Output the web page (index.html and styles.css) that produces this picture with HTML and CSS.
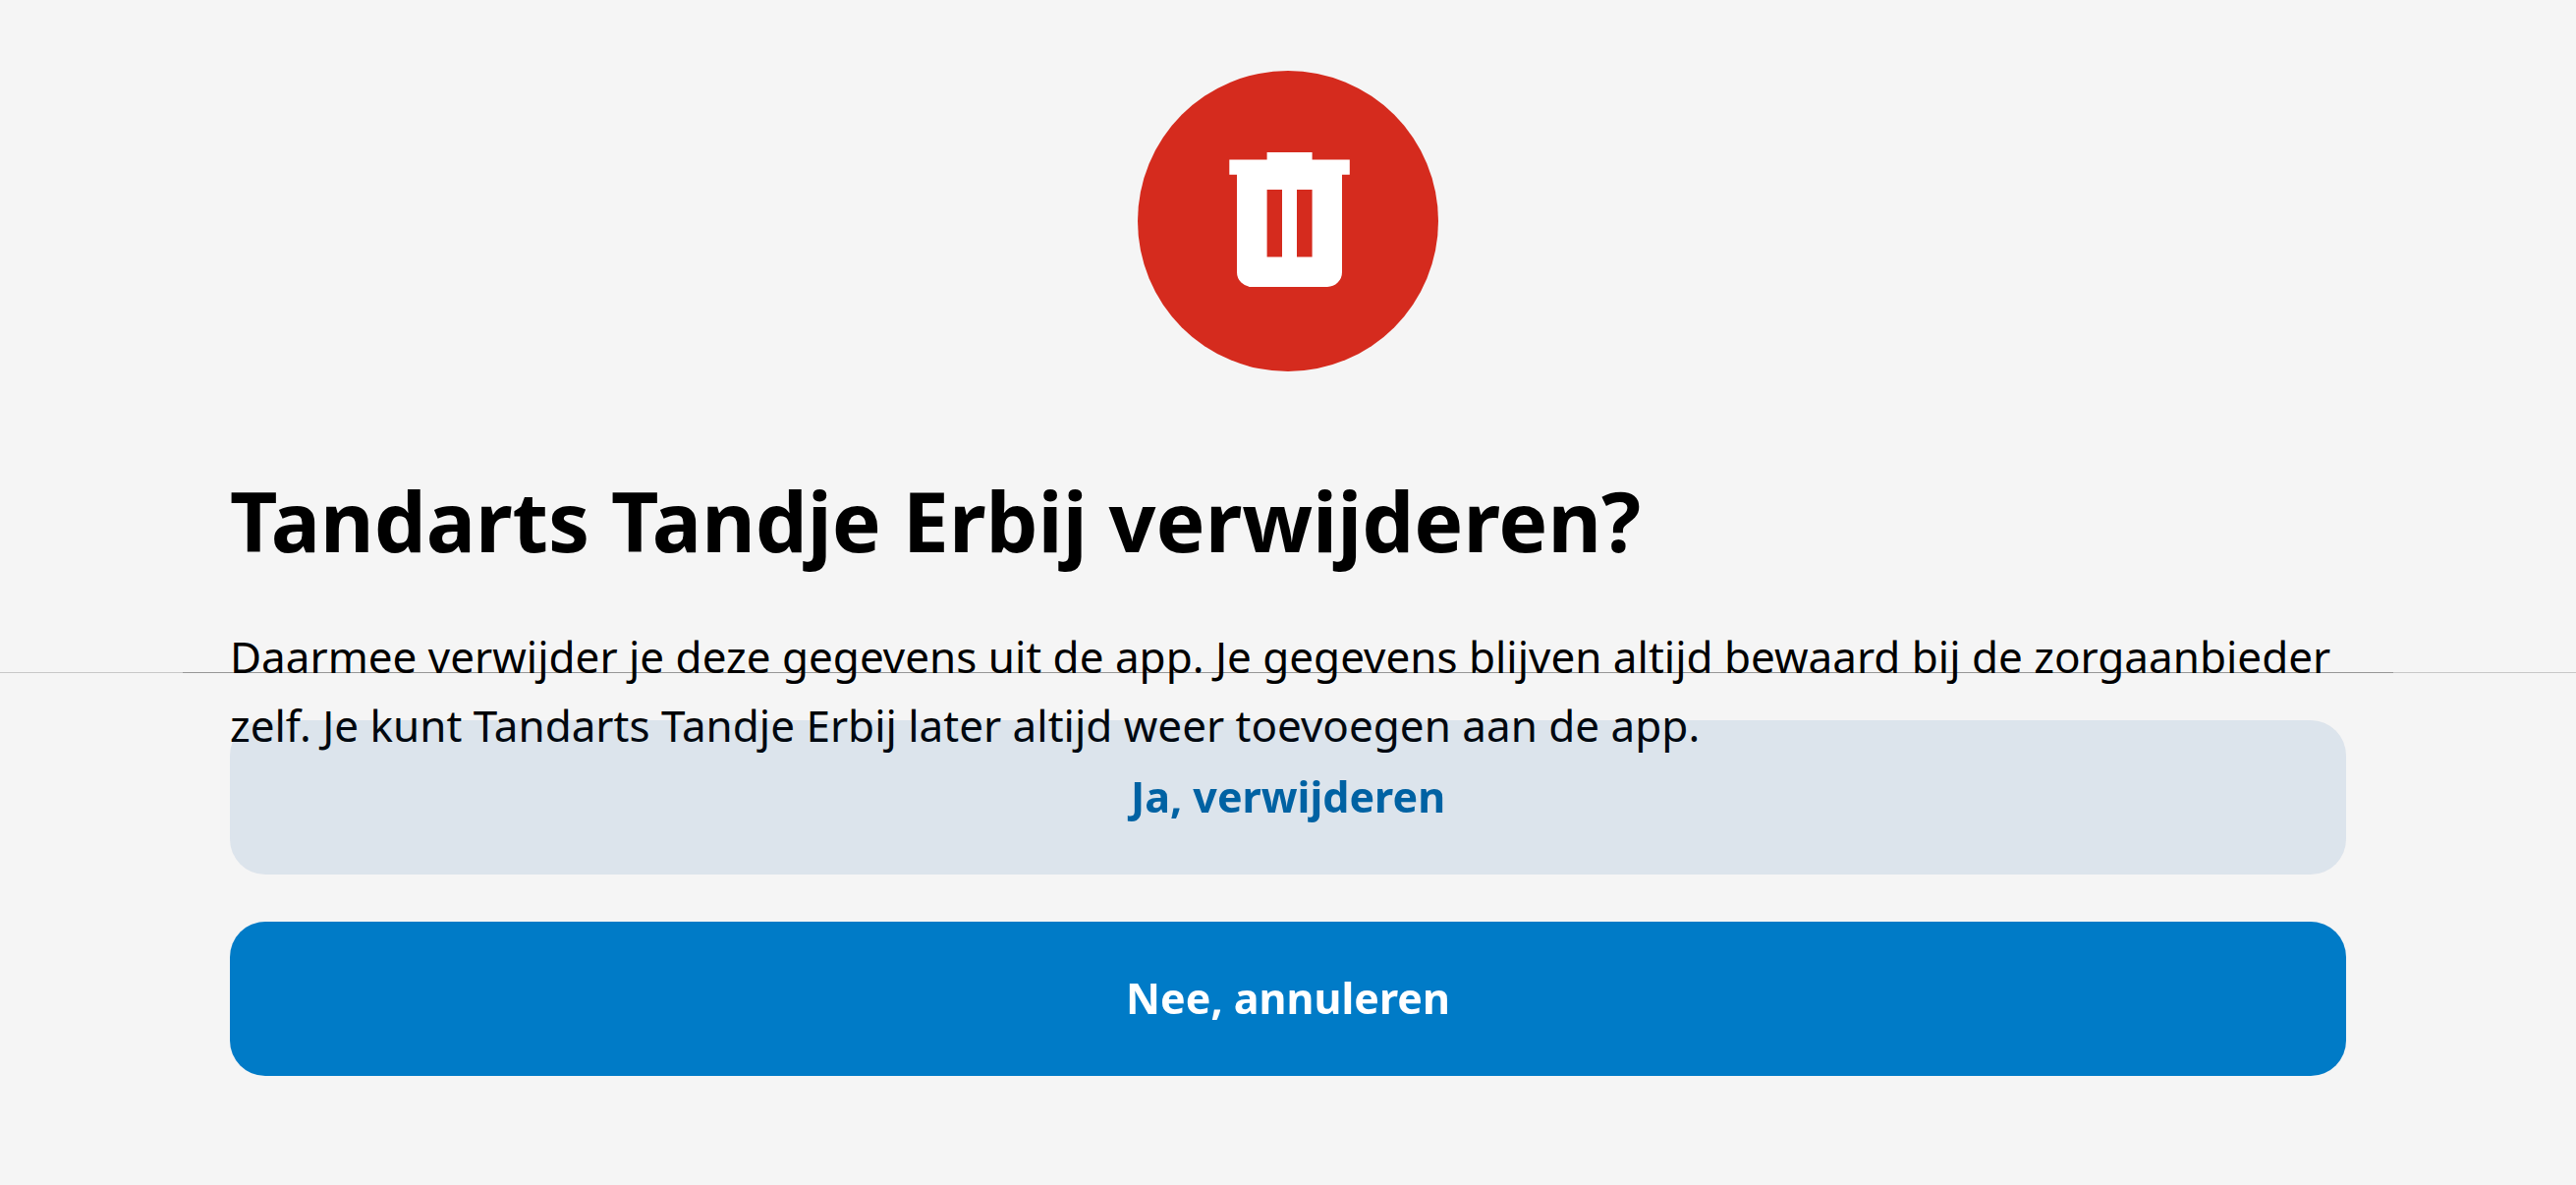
FILE: index.html
```
<!DOCTYPE html>
<html lang="nl">
<head>
  <meta charset="utf-8">
  <meta name="viewport" content="width=device-width, initial-scale=1">
  <title>Tandarts Tandje Erbij verwijderen?</title>
  <link rel="stylesheet" href="styles.css">
</head>
<body>
  <main class="content">
    <svg class="badge" viewBox="0 0 306 306" aria-hidden="true">
      <circle cx="153" cy="153" r="153" fill="#d52b1e"/>
      <path fill="#fff" fill-rule="evenodd" d="M131.6 83h46v7.500h38.200v15.200h-7.800v99.300a15 15 0 0 1-15 15h-77a15 15 0 0 1-15-15v-99.300h-7.700v-15.200h38.300zM131.600 121h15.400v68.500h-15.400zM162 121h15.600v68.500h-15.600z"/>
    </svg>
    <h1 class="title">Tandarts Tandje Erbij verwijderen?</h1>
    <p class="text">Daarmee verwijder je deze gegevens uit de app. Je gegevens blijven altijd bewaard bij de zorgaanbieder zelf. Je kunt Tandarts Tandje Erbij later altijd weer toevoegen aan de app.</p>
  </main>
  <footer class="footer">
    <div class="actions">
      <button class="button button-secondary" type="button">Ja, verwijderen</button>
      <button class="button button-primary" type="button">Nee, annuleren</button>
    </div>
  </footer>
</body>
</html>
```
FILE: styles.css
```
* {
  box-sizing: border-box;
}

body {
  margin: 0;
  background: #f5f5f5;
  color: #000;
  font-family: "Noto Sans", "Open Sans", sans-serif;
}

.content {
  display: flex;
  flex-direction: column;
  padding: 72px 234px 0;
}

.badge {
  align-self: center;
  width: 306px;
  height: 306px;
}

.title {
  margin: 94px 0 0;
  font-size: 84px;
  font-weight: 700;
  line-height: 116px;
}

.text {
  margin: 45px 0 0;
  font-size: 44px;
  line-height: 70px;
}

.footer {
  position: fixed;
  inset: auto 0 0;
  padding: 0 186px 63px;
  border-top: 1px solid rgba(0, 0, 0, 0.18);
}

.actions {
  display: flex;
  flex-direction: column;
  gap: 48px;
  margin-top: -1px;
  padding: 48px;
  border-top: 1px solid rgba(0, 0, 0, 0.25);
}

.button {
  height: 157px;
  padding: 0 48px 2px;
  border: 0;
  border-radius: 36px;
  font: inherit;
  font-size: 43px;
  font-weight: 700;
}

.button-secondary {
  background: rgba(0, 82, 153, 0.1);
  color: #0062a3;
}

.button-primary {
  background: #007bc7;
  color: #fff;
}
```
